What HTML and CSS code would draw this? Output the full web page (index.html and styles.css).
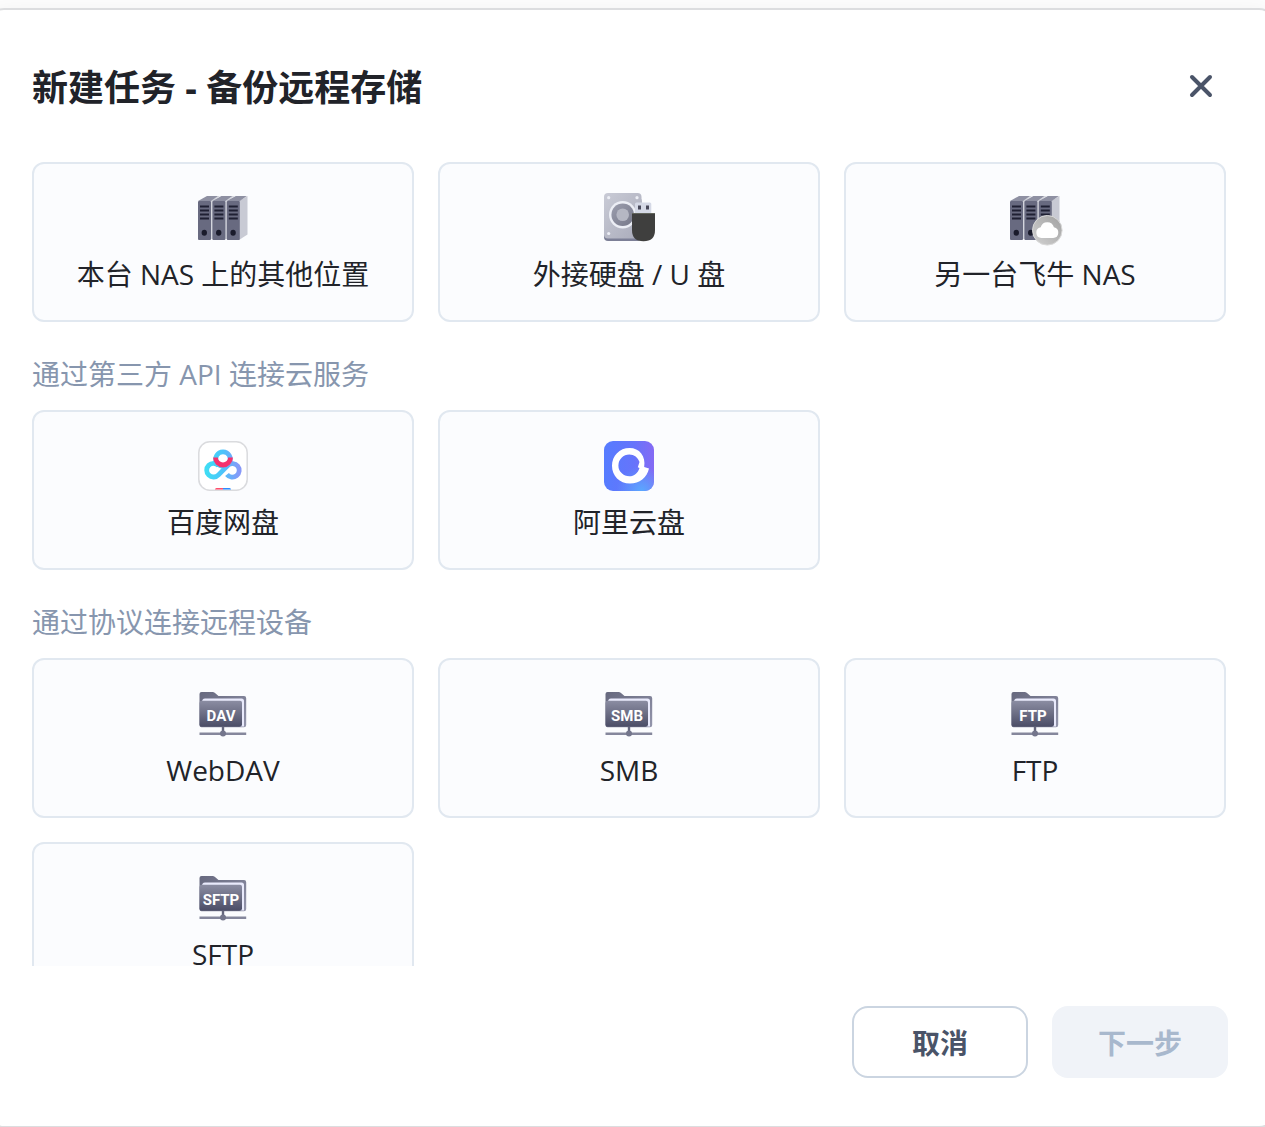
FILE: index.html
```html
<!DOCTYPE html>
<html lang="zh-CN">
<head>
    <meta charset="UTF-8">
    <meta name="viewport" content="width=device-width, initial-scale=1.0">
    <title>新建任务 - 备份远程存储</title>
    <link rel="stylesheet" href="styles.css">
</head>
<body>
    <!-- Shared icon parts -->
    <svg class="defs" width="0" height="0" aria-hidden="true">
        <defs>
            <linearGradient id="folderFront" x1="0" y1="0" x2="0" y2="1">
                <stop offset="0" stop-color="#8b8da2"/>
                <stop offset="1" stop-color="#4b4d66"/>
            </linearGradient>
            <linearGradient id="folderBack" x1="0" y1="0" x2="1" y2="1">
                <stop offset="0" stop-color="#66687e"/>
                <stop offset="1" stop-color="#9496ac"/>
            </linearGradient>
            <linearGradient id="driveBody" x1="0" y1="0" x2="1" y2="1">
                <stop offset="0" stop-color="#c9cbd6"/>
                <stop offset="1" stop-color="#a9abba"/>
            </linearGradient>
            <linearGradient id="driveRing" x1="0" y1="0" x2="1" y2="1">
                <stop offset="0" stop-color="#9c9eae"/>
                <stop offset="1" stop-color="#767889"/>
            </linearGradient>
            <linearGradient id="badge" x1="0" y1="1" x2="1" y2="0">
                <stop offset="0" stop-color="#d2d2d2"/>
                <stop offset="1" stop-color="#a0a0a0"/>
            </linearGradient>
            <linearGradient id="baiduBlue" x1="0" y1="0" x2="1" y2="0">
                <stop offset="0" stop-color="#3fdcf4"/>
                <stop offset="0.5" stop-color="#4cc4fb"/>
                <stop offset="1" stop-color="#8798f8"/>
            </linearGradient>
            <linearGradient id="aliBg" x1="0" y1="0" x2="1" y2="0">
                <stop offset="0" stop-color="#567cff"/>
                <stop offset="0.6" stop-color="#6674fb"/>
                <stop offset="1" stop-color="#856af4"/>
            </linearGradient>
            <radialGradient id="aliGlow" cx="0.75" cy="1" r="0.5">
                <stop offset="0" stop-color="#5aa8ff"/>
                <stop offset="1" stop-color="#5aa8ff" stop-opacity="0"/>
            </radialGradient>

            <g id="server">
                <path d="M3 13l9-5h11l-7 5z" fill="#8e90a2"/>
                <rect x="3" y="13" width="13" height="39" rx="1" fill="#686a80"/>
                <path d="M5 18.500h9M5 22.500h9M5 26.500h9M5 30.500h9" stroke="#1f2033" stroke-width="2"/>
                <ellipse cx="9.300" cy="44.700" rx="2.700" ry="3" fill="#1a1b2b"/>
            </g>
            <g id="servers">
                <path d="M15 13l8-5h2l-7 5v38h-3zM29.500 13l8-5h2l-7 5v38h-3z" fill="#d3d5dd"/>
                <path d="M44 13l8.500-5v38.500L44 52z" fill="#c8cad4"/>
                <use href="#server"/>
                <use href="#server" x="14.400"/>
                <use href="#server" x="28.800"/>
            </g>
            <g id="folder">
                <path d="M4.500 10q0-2 2-2h11q1.500 0 2.500 1l3.500 3H49q2.200 0 2.200 2.200V41q0 2.300-2.200 2.300H6.500q-2 0-2-2z" fill="url(#folderBack)"/>
                <path d="M7 18q0-3.500 3-3.500h36.500q2.500 0 2.500 2.500v25.500h-4z" fill="#e9eafc"/>
                <path d="M4.500 19q0-2.200 2.200-2.200H45q2 0 2 2V40.500q0 2.300-2.200 2.300H6.700q-2.200 0-2.200-2.300z" fill="url(#folderFront)"/>
                <path d="M28 43v5" stroke="#66687e" stroke-width="2.400"/>
                <path d="M4.500 49.700h46.700" stroke="#85879c" stroke-width="2.400"/>
                <circle cx="28" cy="49.500" r="3" fill="#74768c"/>
            </g>
        </defs>
    </svg>

    <main class="dialog" role="dialog" aria-labelledby="dialogTitle">
        <header class="dialog-header">
            <h1 id="dialogTitle">新建任务 - 备份远程存储</h1>
            <button class="close" type="button" aria-label="关闭">
                <svg viewBox="0 0 28 28" aria-hidden="true"><path d="M5 5l18 18M23 5L5 23"/></svg>
            </button>
        </header>

        <div class="dialog-body">
            <div class="cards">
                <button class="card" type="button">
                    <svg class="icon" viewBox="0 0 56 56" aria-hidden="true"><use href="#servers"/></svg>
                    <span>本台 NAS 上的其他位置</span>
                </button>
                <button class="card" type="button">
                    <svg class="icon" viewBox="0 0 56 56" aria-hidden="true">
                        <rect x="3" y="9" width="37.500" height="44" rx="4" fill="#7c7f96"/>
                        <rect x="3" y="5" width="37.500" height="45.500" rx="4" fill="url(#driveBody)"/>
                        <g fill="#eceef5">
                            <circle cx="7.700" cy="9.700" r="1.600"/>
                            <circle cx="36" cy="9.700" r="1.600"/>
                            <circle cx="7.700" cy="45.500" r="1.600"/>
                            <circle cx="21.700" cy="26.700" r="13.700"/>
                        </g>
                        <circle cx="21.700" cy="26.700" r="11.300" fill="url(#driveRing)"/>
                        <circle cx="21.700" cy="26.700" r="6.300" fill="#b5b7c3"/>
                        <path d="M34 26V16q0-1.500 1.500-1.500h13.300q1.500 0 1.500 1.500v10z" fill="#d5d9e6"/>
                        <path d="M37 17.500h3v4h-3zM45 17.500h3v4h-3z" fill="#48495a"/>
                        <path d="M31 25.500h23V42q0 11.300-11.500 11.300T31 42z" fill="#3f3f3e"/>
                        <path d="M31 25.500h23" stroke="#62655c"/>
                    </svg>
                    <span>外接硬盘 / U 盘</span>
                </button>
                <button class="card" type="button">
                    <svg class="icon" viewBox="0 0 56 56" aria-hidden="true">
                        <use href="#servers"/>
                        <circle cx="40.300" cy="42.300" r="14.800" fill="url(#badge)" stroke="#d9d9d9"/>
                        <path d="M34.500 50a5.400 5.400 0 0 1-.8-10.700 6.800 6.800 0 0 1 13.200 0 5.400 5.400 0 0 1-.8 10.700z" fill="#fff"/>
                    </svg>
                    <span>另一台飞牛 NAS</span>
                </button>
            </div>

            <h2>通过第三方 API 连接云服务</h2>
            <div class="cards">
                <button class="card" type="button">
                    <svg class="icon" viewBox="0 0 56 56" aria-hidden="true">
                        <rect x="3.800" y="5.800" width="48.400" height="48.400" rx="11" fill="#fff" stroke="#dadbde" stroke-width="1.500"/>
                        <g fill="none" stroke-width="4.800">
                            <path d="M28 15.800a7.200 7.200 0 1 1-.01 0M33 29.200a6.800 6.800 0 1 1-1 9.300M33 29.200L23.500 38.800a6.800 6.800 0 1 1 0-9.200" stroke="url(#baiduBlue)"/>
                            <path d="M20.500 21.500a7.500 7.500 0 1 0 15 0" stroke="#f5316d"/>
                        </g>
                        <path d="M20 53.500q0-1.500 1.500-1.500H28v1.500z" fill="#ff4d6b"/>
                        <path d="M28 52h6.500q1.500 0 1.500 1.500h-8z" fill="#2b8cff"/>
                    </svg>
                    <span>百度网盘</span>
                </button>
                <button class="card" type="button">
                    <svg class="icon" viewBox="0 0 56 56" aria-hidden="true">
                        <rect x="3" y="5" width="50" height="50" rx="9" fill="url(#aliBg)"/>
                        <rect x="3" y="5" width="50" height="50" rx="9" fill="url(#aliGlow)"/>
                        <path d="M48 32.500C46 41.500 38.500 47.600 29 47.600 18.500 47.600 11 39.800 11 29.800S18.500 12 28.500 12C38.500 12 45 20 43.200 31zM28.300 18.500a10.900 10.900 0 1 0 0 21.800c5 0 8.700-3.300 10.200-8.300L36.800 31.300 38.500 26C37 21.500 33.200 18.500 28.300 18.500z" fill="#fff" fill-rule="evenodd"/>
                    </svg>
                    <span>阿里云盘</span>
                </button>
            </div>

            <h2>通过协议连接远程设备</h2>
            <div class="cards">
                <button class="card" type="button">
                    <svg class="icon" viewBox="0 0 56 56" aria-hidden="true"><use href="#folder"/><text x="26" y="37">DAV</text></svg>
                    <span>WebDAV</span>
                </button>
                <button class="card" type="button">
                    <svg class="icon" viewBox="0 0 56 56" aria-hidden="true"><use href="#folder"/><text x="26" y="37">SMB</text></svg>
                    <span>SMB</span>
                </button>
                <button class="card" type="button">
                    <svg class="icon" viewBox="0 0 56 56" aria-hidden="true"><use href="#folder"/><text x="26" y="37">FTP</text></svg>
                    <span>FTP</span>
                </button>
                <button class="card" type="button">
                    <svg class="icon" viewBox="0 0 56 56" aria-hidden="true"><use href="#folder"/><text x="26" y="37">SFTP</text></svg>
                    <span>SFTP</span>
                </button>
            </div>
        </div>

        <footer class="dialog-footer">
            <button class="btn btn-cancel" type="button">取消</button>
            <button class="btn btn-next" type="button" disabled>下一步</button>
        </footer>
    </main>
</body>
</html>
```
FILE: styles.css
```css
* {
    box-sizing: border-box;
}
body {
    font-family: "Open Sans", "Noto Sans CJK SC", sans-serif;
    height: 100vh;
    margin: 0;
    padding-top: 8px;
    background: #fdfdfd;
    color: #212329;
    overflow: hidden;
}
button {
    font-family: inherit;
    color: inherit;
    cursor: pointer;
}
.defs {
    position: absolute;
}
.dialog {
    display: flex;
    flex-direction: column;
    height: calc(100vh - 7px);
    margin: 0 -10px 0 -12px;
    background: #fff;
    border: 2px solid #dcdddf;
    border-radius: 16px;
    box-shadow: 0 4px 24px rgba(0, 0, 0, 0.06);
}
.dialog-header {
    display: flex;
    align-items: flex-start;
    justify-content: space-between;
    padding: 48px 48px 44px 42px;
}
.dialog-header h1 {
    margin: 0;
    font-size: 36px;
    line-height: 60px;
    font-weight: 700;
}
.close {
    width: 48px;
    height: 56px;
    padding: 10px;
    border: none;
    background: none;
}
.close svg {
    display: block;
    width: 28px;
    height: 28px;
    fill: none;
    stroke: #4a5468;
    stroke-width: 4;
    stroke-linecap: round;
}
.dialog-body {
    flex: 1;
    min-height: 0;
    padding: 0 47px 0 42px;
    overflow-y: auto;
    scrollbar-width: none;
}
.dialog-body h2 {
    margin: 30px 0 14px;
    font-size: 28px;
    line-height: 44px;
    font-weight: 400;
    color: #8796ae;
}
.cards {
    display: grid;
    grid-template-columns: repeat(3, 1fr);
    gap: 24px;
}
.card {
    display: flex;
    flex-direction: column;
    align-items: center;
    justify-content: center;
    gap: 8px;
    min-height: 160px;
    padding: 0 16px;
    border: 2px solid #e1e8f0;
    border-radius: 12px;
    background: #fbfcfe;
    font-size: 28px;
    line-height: 44px;
}
.icon {
    width: 56px;
    height: 56px;
    overflow: visible;
}
.icon text {
    font-family: Roboto, sans-serif;
    font-size: 15px;
    font-weight: 700;
    text-anchor: middle;
    fill: #fff;
}
.dialog-footer {
    display: flex;
    justify-content: flex-end;
    gap: 24px;
    padding: 40px 45px 48px;
}
.btn {
    width: 176px;
    height: 72px;
    border: 2px solid transparent;
    border-radius: 16px;
    font-size: 28px;
    font-weight: 700;
}
.btn-cancel {
    border-color: #cbd5e1;
    background: #fff;
    color: #4a5468;
}
.btn-next {
    background: #f0f3f8;
    color: #a8b8cd;
    cursor: default;
}
```
